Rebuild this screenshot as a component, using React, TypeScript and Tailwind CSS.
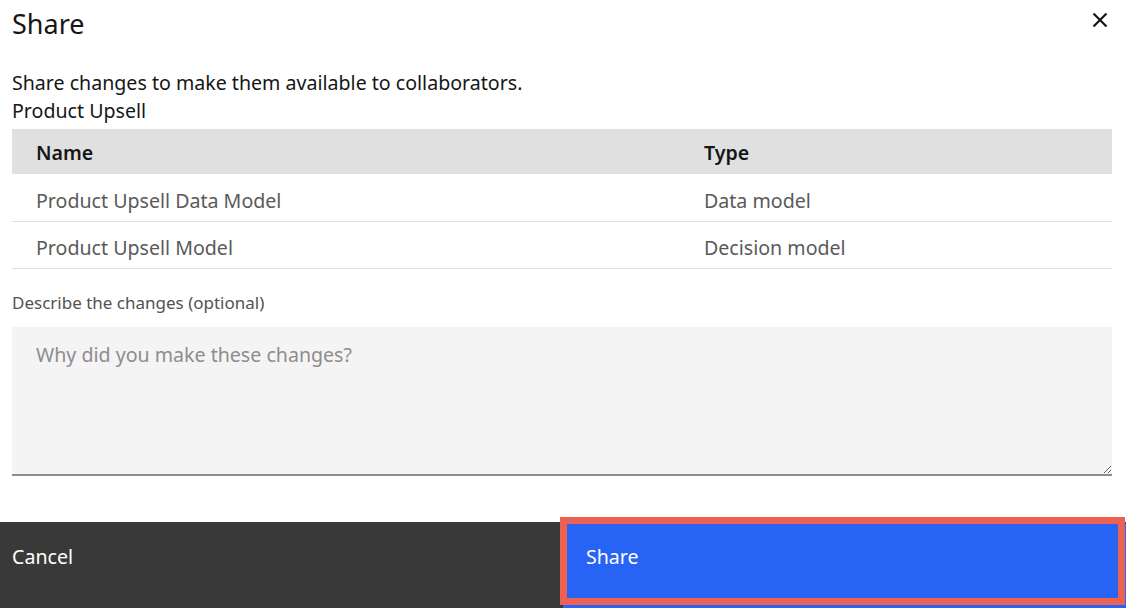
import { useState } from 'react'

const ITEMS = [
  { name: 'Product Upsell Data Model', type: 'Data model' },
  { name: 'Product Upsell Model', type: 'Decision model' },
]

export default function App() {
  const [note, setNote] = useState('')

  return (
    <div className="w-[1126px] h-[608px] bg-white flex flex-col font-['Noto_Sans',sans-serif] text-[#161616] overflow-hidden">
      {/* Header */}
      <div className="flex items-start justify-between pl-3 pr-[16px] pt-[7px]">
        <h2 className="text-[27px] leading-[34px] font-normal">Share</h2>
        <button type="button" className="mt-[3px] p-0.5 text-[#161616]" aria-label="Close">
          <svg width="16" height="16" viewBox="0 0 16 16" fill="none">
            <path d="M1.5 1.5L14.5 14.5M14.5 1.5L1.5 14.5" stroke="currentColor" strokeWidth="2.2" />
          </svg>
        </button>
      </div>

      {/* Body */}
      <div className="flex flex-col pl-3 pr-[14px] pt-[28px]">
        <p className="text-[19.6px] leading-[28px]">Share changes to make them available to collaborators.</p>
        <p className="text-[19.6px] leading-[28px]">Product Upsell</p>

        <table className="mt-[4px] w-full border-collapse text-[19.6px]">
          <thead>
            <tr className="bg-[#e0e0e0] h-[45px]">
              <th className="text-left font-semibold pl-6 pt-[3px] w-[692px]">Name</th>
              <th className="text-left font-semibold pt-[3px]">Type</th>
            </tr>
          </thead>
          <tbody>
            {ITEMS.map((item) => (
              <tr key={item.name} className="h-[47px] border-b border-[#e0e0e0] text-[#5a5a5a]">
                <td className="pl-6 pt-[7px]">{item.name}</td>
                <td className="pt-[7px]">{item.type}</td>
              </tr>
            ))}
          </tbody>
        </table>

        <label htmlFor="changes" className="mt-[22px] text-[17px] leading-[24px] text-[#525252]">
          Describe the changes (optional)
        </label>
        <textarea
          id="changes"
          value={note}
          onChange={(e) => setNote(e.target.value)}
          placeholder="Why did you make these changes?"
          className="mt-[12px] h-[149px] w-full bg-[#f4f4f4] border-b-2 border-[#8d8d8d] px-6 pt-[14px] text-[19.6px] leading-[28px] placeholder:text-[#8d8d8d] outline-none resize-y"
        />
      </div>

      {/* Footer */}
      <div className="mt-auto relative flex h-[86px] bg-[#393939] text-white text-[19.6px]">
        <button type="button" className="w-[563px] text-left pl-3 pt-[20px] self-stretch flex items-start">
          Cancel
        </button>
        <button type="button" className="flex-1 bg-[#2764f5] border-t-2 border-[#1a3fa8] text-left pl-[23px] pt-[18px] flex items-start">
          Share
        </button>
        <div className="absolute left-[560px] top-[-5px] w-[565px] h-[88px] border-[7px] border-[#ec6152] pointer-events-none" />
      </div>
    </div>
  )
}
